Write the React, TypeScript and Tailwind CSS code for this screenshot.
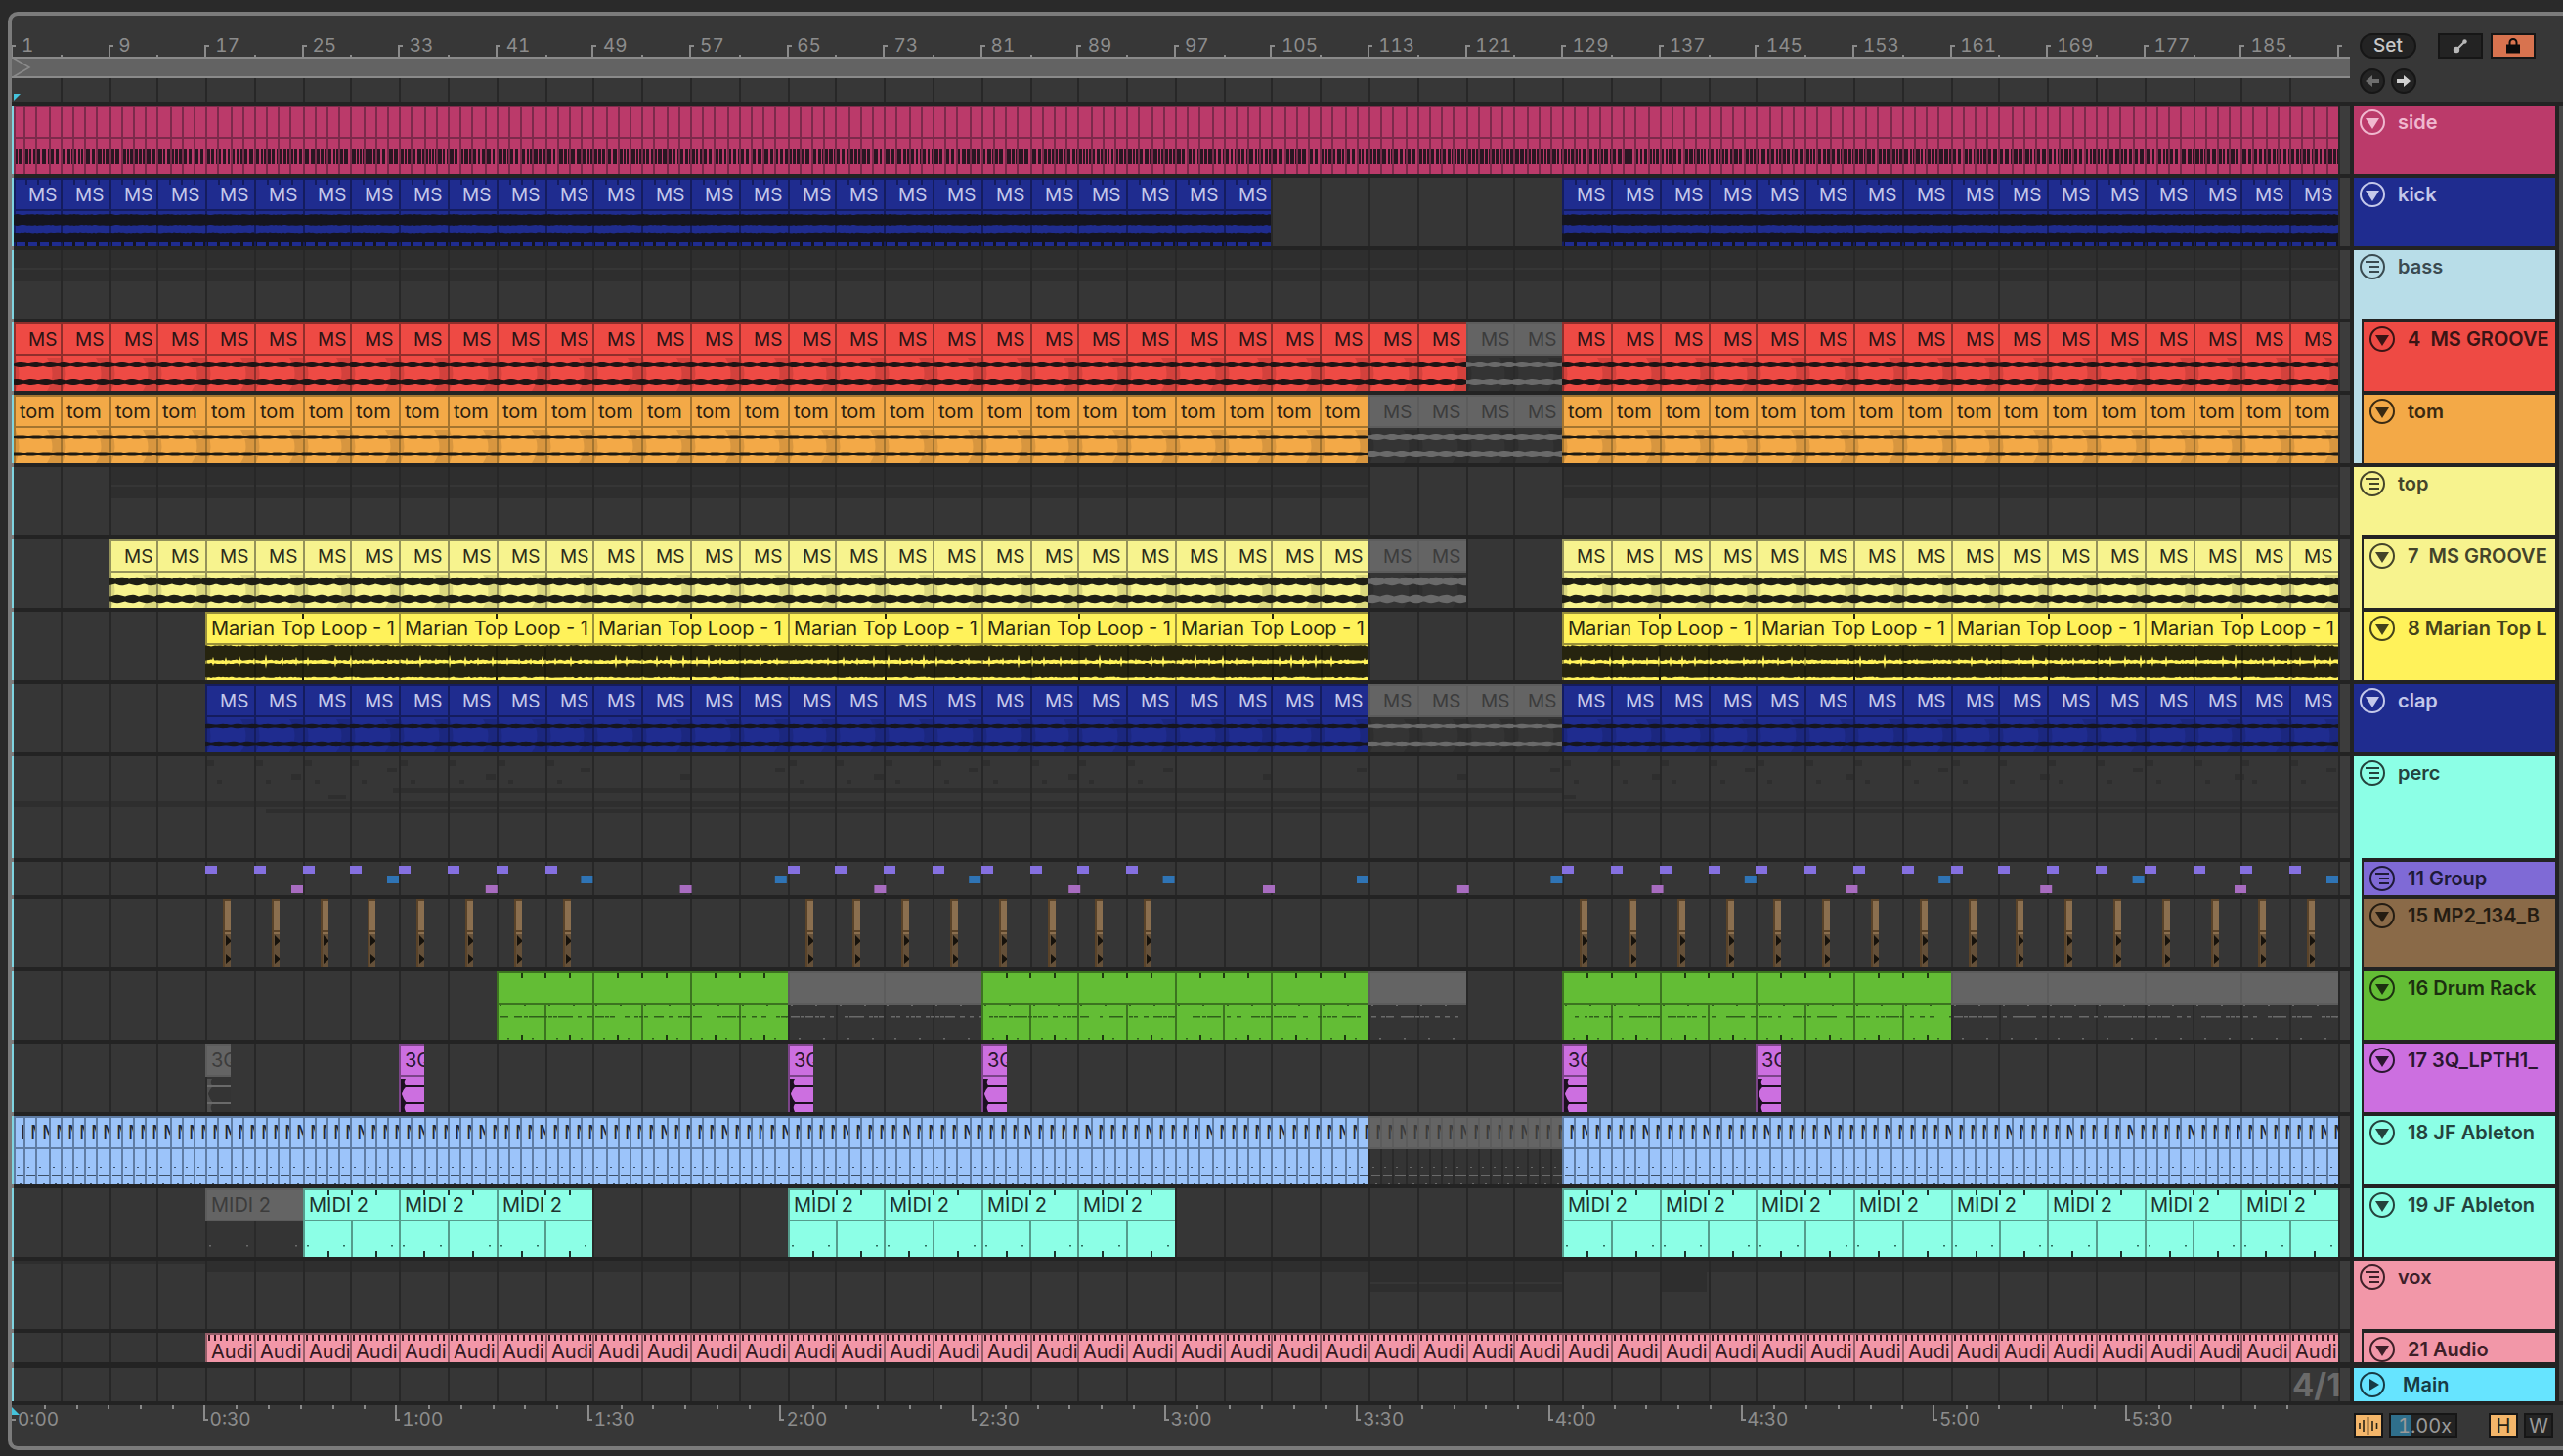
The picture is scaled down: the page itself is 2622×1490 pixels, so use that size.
import type { ReactNode } from "react";

type Kind = "side" | "kick" | "red" | "tom" | "yellow" | "marian" | "clap" | "brown" | "green" | "orchid" | "jf" | "midi" | "audio";

type ClipSpec = {
  x1: number;
  x2: number;
  kind: Kind;
  label?: string;
  muted?: boolean;
  seed: number;
};

const THEME: Record<Kind, { bg: string; edge: string; text: string; ink: string }> = {
  side: { bg: "bg-[#bb3a6a]", edge: "border-[#7c2a4b]", text: "text-[#f0b8cf]", ink: "#2a1622" },
  kick: { bg: "bg-[#1f2c8f]", edge: "border-[#141c5e]", text: "text-[#c4c8ea]", ink: "#15151f" },
  red: { bg: "bg-[#ee4a44]", edge: "border-[#8f2e2b]", text: "text-[#2b1414]", ink: "#1e1414" },
  tom: { bg: "bg-[#f3a947]", edge: "border-[#a3742f]", text: "text-[#2b2010]", ink: "#1e1a12" },
  yellow: { bg: "bg-[#f7f38e]", edge: "border-[#94925a]", text: "text-[#2c2c1a]", ink: "#1e1e14" },
  marian: { bg: "bg-[#fff25a]", edge: "border-[#99903a]", text: "text-[#2c2a10]", ink: "#26240f" },
  clap: { bg: "bg-[#1f2c8f]", edge: "border-[#141c5e]", text: "text-[#c4c8ea]", ink: "#15151f" },
  brown: { bg: "bg-[#8b6f4f]", edge: "border-[#5a4329]", text: "text-[#241c12]", ink: "#16120c" },
  green: { bg: "bg-[#63bd35]", edge: "border-[#3c7320]", text: "text-[#1c3010]", ink: "#2f5f1a" },
  orchid: { bg: "bg-[#cc6fe0]", edge: "border-[#7c4489]", text: "text-[#2a1630]", ink: "#1c1020" },
  jf: { bg: "bg-[#9cc4fa]", edge: "border-[#5f7ca3]", text: "text-[#1f2833]", ink: "#3c5068" },
  midi: { bg: "bg-[#8cffe6]", edge: "border-[#559c8c]", text: "text-[#1e332e]", ink: "#2f6a5c" },
  audio: { bg: "bg-[#f297a8]", edge: "border-[#955d68]", text: "text-[#33191f]", ink: "#33191f" },
};

// 4-bar grid, snapped to the even pixels the 2x capture uses
const xc = (c: number) => 2 * Math.floor((12.9 + c * 49.58) / 2);
const xb = (b: number) => 2 * Math.floor((12.9 + b * 12.395) / 2);

const rnd = (n: number) => {
  const s = Math.sin(n * 127.1) * 43758.5453;
  return s - Math.floor(s);
};

function wavePath(w: number, cy: number, amp: number, seed: number, lobes: boolean) {
  const top: string[] = [];
  const bottom: string[] = [];
  for (let x = 0; x <= w; x += 2) {
    const a = lobes
      ? amp * (0.55 + 0.45 * Math.abs(Math.sin(x * 0.21 + seed)))
      : amp * (0.82 + 0.18 * rnd(x + seed));
    top.push(`${x} ${(cy - a).toFixed(1)}`);
    bottom.unshift(`${x} ${(cy + a).toFixed(1)}`);
  }
  return `M${top.join("L")}L${bottom.join("L")}Z`;
}

function spikes(w: number, seed: number) {
  let d = "";
  for (let x = 8; x < w; x += 11 + Math.round(rnd(x + seed) * 6)) {
    const r = 3 + rnd(x * 3 + seed) * 5;
    d += `M${x - 1.5} 51L${x} ${51 - r}L${x + 1.5} 51L${x} ${51 + r}Z`;
  }
  return d;
}

function ticks(w: number, count: number, y: number, h: number, fill: string, opacity = 1) {
  const out: ReactNode[] = [];
  for (let i = 1; i < count; i++) {
    out.push(
      <rect key={`t${y}-${i}`} x={Math.round((w * i) / count)} y={y} width={2} height={h} fill={fill} opacity={opacity} />
    );
  }
  return out;
}

function Art({ clip, h }: { clip: ClipSpec; h: number }) {
  const { kind, muted, seed } = clip;
  const w = clip.x2 - clip.x1;
  const ink = muted ? "#6a6a6a" : THEME[kind].ink;
  const fade = (
    <path
      d={`M${w - 14} 36Q${w - 3} ${(36 + h) / 2} ${w - 14} ${h}L${w} ${h}L${w} 36Z M2 36Q9 ${(36 + h) / 2} 2 ${h}Z`}
      fill="#000"
      opacity={0.11}
    />
  );
  let body: ReactNode = null;
  if (kind === "side") {
    const rects: ReactNode[] = [];
    let x = 2;
    let i = 0;
    while (x < w) {
      const bw = 2 + Math.round(rnd(seed * 7 + i) * 2);
      rects.push(<rect key={i} x={x} y={44} width={bw} height={16} fill={ink} />);
      x += bw + 1 + Math.round(rnd(seed + i * 3));
      i++;
    }
    body = rects;
  } else if (kind === "kick") {
    const bumps: ReactNode[] = [];
    for (let x = 2; x < w; x += 12) {
      bumps.push(<rect key={x} x={x + 1} y={66} width={9} height={4} fill="#1f2c8f" />);
    }
    body = (
      <>
        {ticks(w, 4, 2, 5, "#141c5e")}
        <path d={wavePath(w, 43, 6, seed, false)} fill={ink} />
        <path d={wavePath(w, 61, 5.5, seed + 3, false)} fill={ink} />
        <rect x={2} y={65} width={w} height={5} fill={ink} />
        {bumps}
      </>
    );
  } else if (kind === "red" || kind === "tom" || kind === "yellow" || kind === "clap") {
    const amp = { red: 3, tom: 1.6, yellow: 4.2, clap: 2.2 }[kind];
    body = (
      <>
        {fade}
        <path d={wavePath(w, 43, amp, seed, true)} fill={ink} />
        <path d={wavePath(w, 61, amp, seed + 1, true)} fill={ink} />
      </>
    );
  } else if (kind === "marian") {
    body = (
      <>
        {ticks(w, 2, 2, 5, "#26240f")}
        {ticks(w, 2, 65, 5, "#26240f")}
        <path d={wavePath(w, 42, 8, seed, false)} fill={ink} />
        <path d={wavePath(w, 60, 8, seed + 5, false)} fill={ink} />
        <path d={spikes(w, seed)} fill="#fff25a" />
        {ticks(w, 4, 34, 36, "#000", 0.25)}
      </>
    );
  } else if (kind === "brown") {
    body = (
      <>
        <path d="M2 36L8 36L8 70L2 70Z" fill="#000" opacity={0.28} />
        <path d="M3 37L9 43L3 48Z M3 56L9 61L3 66Z" fill={ink} />
      </>
    );
  } else if (kind === "green") {
    const bits: ReactNode[] = [];
    for (let x = 3; x < w; x += 5) {
      const on = rnd(seed + x) > 0.3;
      if (on) bits.push(<rect key={x} x={x} y={46} width={3 + Math.round(rnd(x) * 3)} height={1.5} fill={ink} />);
      if (x % 25 === 3) {
        bits.push(<rect key={`a${x}`} x={x} y={34} width={2} height={1.5} fill={ink} />);
        bits.push(<rect key={`b${x}`} x={x + 8} y={68} width={2} height={1.5} fill={ink} />);
      }
    }
    body = (
      <>
        {!muted ? ticks(w, 4, 2, 5, "#1e3a10") : null}
        {!muted ? ticks(w, 4, 65, 5, "#1e3a10") : null}
        <rect x={w / 2} y={34} width={2} height={36} fill={muted ? "#2a2a2a" : "#3c7320"} />
        {bits}
      </>
    );
  } else if (kind === "orchid") {
    body = (
      <>
        <rect x={2} y={42} width={w} height={2} fill={ink} />
        <rect x={2} y={60} width={w} height={2} fill={ink} />
        <path
          d="M2 36L7 36Q4 40 8 43Q4 46 3 52Q5 58 8 61Q4 64 7 70L2 70Z"
          fill={ink}
          opacity={muted ? 0.5 : 1}
        />
      </>
    );
  } else if (kind === "jf") {
    body = (
      <>
        <rect x={4} y={52} width={2} height={1} fill={ink} />
        <rect x={3} y={60} width={w} height={1} fill={ink} />
        <rect x={6 + (seed % 3)} y={69} width={2} height={1} fill={ink} />
      </>
    );
  } else if (kind === "midi") {
    body = (
      <>
        {!muted ? ticks(w, 4, 2, 5, "#1e332e") : null}
        {!muted ? ticks(w, 4, 64, 6, "#1e332e") : null}
        <rect x={w / 2} y={34} width={2} height={36} fill={muted ? "#2a2a2a" : "#559c8c"} />
        <rect x={4} y={58} width={2} height={1.5} fill={ink} />
        <rect x={w / 2 - 8} y={58} width={2} height={1.5} fill={ink} />
        <rect x={w - 8} y={58} width={2} height={1.5} fill={ink} />
      </>
    );
  } else if (kind === "audio") {
    const rects: ReactNode[] = [];
    for (let x = 3; x < w - 1; x += 6) rects.push(<rect key={x} x={x} y={2} width={2} height={6} fill={ink} />);
    body = rects;
  }
  return (
    <svg className="absolute inset-0" width={w} height={h}>
      {body}
    </svg>
  );
}

function Clip({ clip, left, h }: { clip: ClipSpec; left: number; h: number }) {
  const t = THEME[clip.kind];
  const m = clip.muted;
  const isMs = clip.kind === "kick" || clip.kind === "red" || clip.kind === "yellow" || clip.kind === "clap";
  const isAudio = clip.kind === "audio";
  return (
    <div className="relative flex shrink-0 flex-col overflow-hidden" style={{ marginLeft: left, width: clip.x2 - clip.x1 }}>
      <div
        className={`flex shrink-0 items-center overflow-hidden whitespace-nowrap border-l-2 border-t-2 leading-none ${
          isMs ? "pl-[13px] text-[19px]" : clip.kind === "jf" ? "pl-[5px] text-[20px]" : "pl-[4px] text-[20px]"
        } ${isAudio ? "h-[30px] pt-[6px]" : "h-[34px] border-b-2"} ${
          m ? "border-[#5c5c5c] bg-[#646464] text-[#3c3c3c]" : `${t.edge} ${t.bg} ${t.text}`
        }`}
      >
        {clip.label}
      </div>
      {!isAudio && <div className={`flex-1 border-l-2 ${m ? "border-[#2a2a2a] bg-[#343434]" : `${t.edge} ${t.bg}`}`} />}
      <Art clip={clip} h={h} />
    </div>
  );
}

type Band = [number, number, number, number];

function GridLines() {
  return (
    <>
      {Array.from({ length: 47 }, (_, i) => (
        <div key={i} className="absolute bottom-0 top-0 w-[2px] bg-[#272727]" style={{ left: xc(i + 1) - 14 }} />
      ))}
    </>
  );
}

function Lane({
  height,
  h,
  clips = [],
  bands = [],
  children,
}: {
  height: string;
  h: number;
  clips?: ClipSpec[];
  bands?: Band[];
  children?: ReactNode;
}) {
  let pos = 0;
  return (
    <div className={`flex ${height}`}>
      <div className="relative flex w-[2378px] bg-[#363636]">
        <div className="absolute -left-[2px] bottom-0 top-0 w-[2px] bg-[#7fd4e0]" />
        {bands.map(([x1, x2, y, bh], i) => (
          <div key={i} className="absolute bg-[#2e2e2e]" style={{ left: x1 - 14, width: x2 - x1, top: y, height: bh }} />
        ))}
        <GridLines />
        {clips.map((clip, i) => {
          const x1 = Math.max(clip.x1, 14) - 14;
          const left = x1 - pos;
          pos = clip.x2 - 14;
          const fixed = { ...clip, x1: x1 + 14 };
          return <Clip key={i} clip={fixed} left={left} h={h} />;
        })}
        {children}
      </div>
      <div className="w-[2px] bg-[#272727]" />
      <div className="w-[10px] bg-[#3c3c3c]" />
    </div>
  );
}

function cells(a: number, b: number, step: number, kind: Kind, label?: string, muted?: boolean): ClipSpec[] {
  const out: ClipSpec[] = [];
  for (let c = a; c < b; c += step) out.push({ x1: xc(c), x2: xc(c + step), kind, label, muted, seed: c });
  return out;
}

function bars(a: number, b: number, kind: Kind, label?: string, muted?: boolean): ClipSpec[] {
  const out: ClipSpec[] = [];
  for (let i = a; i < b; i++) out.push({ x1: xb(i), x2: xb(i + 1), kind, label, muted, seed: i });
  return out;
}

const narrow = (cs: number[], dx: number, width: number, kind: Kind, label?: string, muted?: boolean): ClipSpec[] =>
  cs.map((c) => ({ x1: xc(c) + dx, x2: xc(c) + dx + width, kind, label, muted, seed: c }));

const range = (a: number, b: number) => Array.from({ length: b - a }, (_, i) => a + i);

const PURPLE = [...range(4, 12), ...range(16, 24), ...range(32, 48)];
const BLUE_X = range(0, 11).map((i) => 396 + i * 198.4);
const PINK_X = range(0, 11).map((i) => 298 + i * 198.8);

function Notes() {
  return (
    <svg className="absolute inset-0" width={2378} height={34}>
      {PURPLE.map((c) => (
        <rect key={c} x={xc(c) - 14} y={4} width={12} height={8} fill="#8570e0" />
      ))}
      {BLUE_X.map((x) => (
        <rect key={x} x={x - 14} y={14} width={12} height={8} fill="#2f74b5" />
      ))}
      {PINK_X.map((x) => (
        <rect key={x} x={x - 14} y={24} width={12} height={8} fill="#a86cc0" />
      ))}
    </svg>
  );
}

// the group lane echoes its children as faint blocks
const PERC_BANDS: Band[] = [
  [14, 2392, 46, 6],
  [402, 1598, 32, 6],
  [272, 1400, 54, 4],
  [1598, 2392, 54, 4],
  [336, 354, 40, 4],
  [1598, 1612, 40, 4],
  ...PURPLE.map((c): Band => [xc(c) + 2, xc(c) + 9, 4, 6]),
  ...BLUE_X.map((x): Band => [x, x + 10, 12, 4]),
  ...PINK_X.map((x): Band => [x, x + 10, 18, 6]),
  ...PURPLE.map((c): Band => [xc(c) + 12, xc(c) + 17, 24, 4]),
];

function FoldIcon({ kind }: { kind: "fold" | "group" | "play" }) {
  return (
    <svg width={26} height={26} viewBox="0 0 26 26" className="shrink-0">
      <circle cx={13} cy={13} r={12} fill="none" stroke="currentColor" strokeWidth={2} />
      {kind === "fold" && <path d="M6 9H20L13 20Z" fill="currentColor" />}
      {kind === "group" && <path d="M6 8H20M10 13H20M10 18H20" stroke="currentColor" strokeWidth={2} fill="none" />}
      {kind === "play" && <path d="M10 7L20 13L10 19Z" fill="currentColor" />}
    </svg>
  );
}

function Header({
  name,
  icon,
  cls,
  height,
  child,
}: {
  name: string;
  icon: "fold" | "group" | "play";
  cls: string;
  height: string;
  child?: boolean;
}) {
  return (
    <div
      className={`flex items-start overflow-hidden whitespace-pre pl-[6px] pt-[4px] text-[20px] font-semibold leading-[26px] ${cls} ${height} ${
        child ? "border-l-2 border-t-4 border-[#232323]" : ""
      }`}
    >
      <FoldIcon kind={icon} />
      <span className={icon === "play" ? "ml-[18px]" : "ml-[13px]"}>{name}</span>
    </div>
  );
}

function HeaderGroup({ bg, children }: { bg: string; children: ReactNode }) {
  return <div className={bg}>{children}</div>;
}

function Kid({ children }: { children: ReactNode }) {
  return <div className="ml-[8px]">{children}</div>;
}

const LOOP_LABELS = range(0, 24).map((i) => 1 + i * 8);
const TIME_LABELS = ["0:00", "0:30", "1:00", "1:30", "2:00", "2:30", "3:00", "3:30", "4:00", "4:30", "5:00", "5:30"];

function BarRuler() {
  return (
    <div className="relative flex h-[42px] pl-[1px] text-[19px] leading-[22px] text-[#8c8c8c] tabular-nums">
      <svg className="absolute inset-0" width={2392} height={42}>
        {range(0, 49).map((c) =>
          c % 2 === 0 ? (
            <path key={c} d={`M${xc(c) - 12} 42V31H${xc(c) - 8}`} fill="none" stroke="#8a8a8a" strokeWidth={2} />
          ) : (
            <rect key={c} x={xc(c) - 12} y={40} width={2} height={2} fill="#8a8a8a" />
          )
        )}
      </svg>
      {LOOP_LABELS.map((n) => (
        <div key={n} className="w-[99.16px] shrink-0 pl-[9px] pt-[20px]">
          {n}
        </div>
      ))}
    </div>
  );
}

function TimeRuler() {
  return (
    <div className="relative flex h-[42px] w-[2392px] text-[19px] leading-[22px] text-[#8c8c8c] tabular-nums">
      <svg className="absolute inset-0" width={2392} height={42}>
        {range(0, 72).map((i) => {
          const x = Math.round(i * 32.77);
          return i % 6 === 0 ? (
            <path key={i} d={i === 0 ? "M0 15H4" : `M${x} 0V15H${x + 4}`} fill="none" stroke="#8a8a8a" strokeWidth={2} />
          ) : (
            <rect key={i} x={x} y={0} width={2} height={4} fill="#8a8a8a" />
          );
        })}
        <path d="M0 2L8 10H0Z" fill="#45c3dc" />
      </svg>
      {TIME_LABELS.map((t) => (
        <div key={t} className="w-[196.6px] shrink-0 pl-[6px] pt-[4px]">
          {t}
        </div>
      ))}
    </div>
  );
}

function TopControls() {
  return (
    <div className="flex-1 pl-[10px] pt-[18px]">
      <div className="flex items-center">
        <div className="flex h-[26px] w-[58px] items-center justify-center rounded-full border-2 border-[#161616] bg-[#232323] text-[19px] font-medium text-[#c8c8c8]">
          Set
        </div>
        <div className="ml-[22px] flex h-[26px] w-[46px] items-center justify-center border-2 border-[#161616] bg-[#232323]">
          <svg width={16} height={16} viewBox="0 0 16 16">
            <path d="M4 12L12 4" stroke="#b8b8b8" strokeWidth={2} />
            <circle cx={4} cy={12} r={3.2} fill="#b8b8b8" />
            <circle cx={12.5} cy={3.5} r={2.2} fill="#b8b8b8" />
          </svg>
        </div>
        <div className="ml-[8px] flex h-[26px] w-[46px] items-center justify-center border-2 border-[#161616] bg-[#d8734f]">
          <svg width={16} height={16} viewBox="0 0 16 16">
            <path d="M4.5 7V4.5a3.5 3.5 0 0 1 7 0V7" fill="none" stroke="#0c0c0c" strokeWidth={2} />
            <rect x={1} y={6.5} width={14} height={9} fill="#0c0c0c" />
          </svg>
        </div>
      </div>
      <div className="mt-[10px] flex gap-[6px]">
        <div className="flex h-[26px] w-[26px] items-center justify-center rounded-full border-2 border-[#161616] bg-[#232323]">
          <svg width={14} height={12} viewBox="0 0 14 12">
            <path d="M0 6L7 0V4H14V8H7V12Z" fill="#6e6e6e" />
          </svg>
        </div>
        <div className="flex h-[26px] w-[26px] items-center justify-center rounded-full border-2 border-[#161616] bg-[#232323]">
          <svg width={14} height={12} viewBox="0 0 14 12">
            <path d="M14 6L7 0V4H0V8H7V12Z" fill="#d0d0d0" />
          </svg>
        </div>
      </div>
    </div>
  );
}

function BottomControls() {
  return (
    <div className="flex flex-1 items-start pl-[4px] pt-[8px] text-[20px] leading-none">
      <div className="flex h-[26px] w-[30px] items-center justify-center border-2 border-[#161616] bg-[#f4b66a]">
        <svg width={20} height={18} viewBox="0 0 20 18">
          <path d="M1 6V12M5 3V15M9.5 0V18M14 4V14M18.5 6V12" stroke="#2a2416" strokeWidth={1.6} />
        </svg>
      </div>
      <div className="relative ml-[6px] flex h-[26px] w-[70px] items-center border-2 border-[#161616] bg-[#232323] pl-[7px] text-[#9a9a9a] tabular-nums">
        <div className="absolute bottom-0 left-0 top-0 w-[20px] bg-[#2f6f8c]" />
        <span className="relative">1.00x</span>
      </div>
      <div className="ml-[32px] flex h-[26px] w-[30px] items-center justify-center border-2 border-[#161616] bg-[#f4b66a] text-[#2a2416]">
        H
      </div>
      <div className="ml-[6px] flex h-[26px] w-[30px] items-center justify-center border-2 border-[#161616] bg-[#232323] text-[#9a9a9a]">
        W
      </div>
    </div>
  );
}

export default function App() {
  return (
    <div className="h-[1490px] w-[2622px] overflow-hidden bg-[#2a2a2a] pl-[8px] pt-[12px] [font-family:Inter,sans-serif]">
      <div className="flex h-[1472px] w-[2700px] flex-col rounded-l-[10px] border-y-4 border-l-4 border-[#7b7b7b] bg-[#373737]">
        <div className="flex h-[88px] w-[2610px]">
          <div className="w-[2392px]">
            <BarRuler />
            <div className="relative h-[22px] border-y-2 border-[#8a8a8a] bg-[#636363]">
              <svg className="absolute -top-[2px] left-0" width={22} height={22}>
                <path d="M1 1L18 11L1 21" fill="none" stroke="#8a8a8a" strokeWidth={1.5} />
              </svg>
            </div>
            <div className="relative ml-[2px] h-[24px] w-[2378px]">
              <GridLines />
              <svg className="absolute left-0 top-[16px]" width={8} height={8}>
                <path d="M0 0H7L0 7Z" fill="#45c3dc" />
              </svg>
            </div>
          </div>
          <TopControls />
        </div>

        <div className="flex h-[1334px] w-[2610px] bg-[#232323] py-[4px]">
          <div className="flex w-[2392px] flex-col border-l-2 border-[#7b7b7b]">
            <div className="flex flex-col gap-[4px]">
              <Lane height="h-[70px]" h={70} clips={bars(0, 192, "side")} />
              <Lane
                height="h-[70px]"
                h={70}
                clips={[...cells(0, 26, 1, "kick", "MS"), ...cells(32, 48, 1, "kick", "MS")]}
              />
              <Lane height="h-[70px]" h={70} bands={[[14, 2392, 0, 18], [14, 2392, 20, 12]]} />
              <Lane
                height="h-[70px]"
                h={70}
                clips={[...cells(0, 30, 1, "red", "MS"), ...cells(30, 32, 1, "red", "MS", true), ...cells(32, 48, 1, "red", "MS")]}
              />
              <Lane
                height="h-[70px]"
                h={70}
                clips={[...cells(0, 28, 1, "tom", "tom"), ...cells(28, 32, 1, "red", "MS", true), ...cells(32, 48, 1, "tom", "tom")]}
              />
              <Lane height="h-[70px]" h={70} bands={[[112, 1400, 0, 18], [112, 1400, 20, 12], [1598, 2392, 0, 18], [1598, 2392, 20, 12]]} />
              <Lane
                height="h-[70px]"
                h={70}
                clips={[...cells(2, 28, 1, "yellow", "MS"), ...cells(28, 30, 1, "yellow", "MS", true), ...cells(32, 48, 1, "yellow", "MS")]}
              />
              <Lane
                height="h-[70px]"
                h={70}
                clips={[...cells(4, 28, 4, "marian", "Marian Top Loop - 1"), ...cells(32, 48, 4, "marian", "Marian Top Loop - 1")]}
              />
              <Lane
                height="h-[70px]"
                h={70}
                clips={[...cells(4, 28, 1, "clap", "MS"), ...cells(28, 32, 1, "clap", "MS", true), ...cells(32, 48, 1, "clap", "MS")]}
              />
              <Lane height="h-[104px]" h={104} bands={PERC_BANDS} />
              <Lane height="h-[34px]" h={34}>
                <Notes />
              </Lane>
              <Lane
                height="h-[70px]"
                h={70}
                clips={[
                  ...narrow(range(4, 12), 18, 8, "brown"),
                  ...narrow(range(16, 24), 18, 8, "brown"),
                  ...narrow(range(32, 48), 18, 8, "brown"),
                ]}
              />
              <Lane
                height="h-[70px]"
                h={70}
                clips={[
                  ...cells(10, 16, 2, "green"),
                  ...cells(16, 20, 2, "green", undefined, true),
                  ...cells(20, 28, 2, "green"),
                  ...cells(28, 30, 2, "green", undefined, true),
                  ...cells(32, 40, 2, "green"),
                  ...cells(40, 48, 2, "green", undefined, true),
                ]}
              />
              <Lane
                height="h-[70px]"
                h={70}
                clips={[
                  ...narrow([4], 0, 26, "orchid", "3Q", true),
                  ...narrow([8, 16, 20, 32, 36], 0, 26, "orchid", "3Q"),
                ]}
              />
              <Lane
                height="h-[70px]"
                h={70}
                clips={[...bars(0, 112, "jf", "M"), ...bars(112, 128, "jf", "M", true), ...bars(128, 192, "jf", "M")]}
              />
              <Lane
                height="h-[70px]"
                h={70}
                clips={[
                  ...cells(4, 6, 2, "midi", "MIDI 2", true),
                  ...cells(6, 12, 2, "midi", "MIDI 2"),
                  ...cells(16, 24, 2, "midi", "MIDI 2"),
                  ...cells(32, 48, 2, "midi", "MIDI 2"),
                ]}
              />
              <Lane
                height="h-[70px]"
                h={70}
                bands={[[210, 2392, 0, 12], [14, 210, 0, 4], [1400, 1598, 12, 10], [1400, 1598, 24, 8], [1698, 1746, 12, 20]]}
              />
              <Lane height="h-[30px]" h={30} clips={cells(4, 48, 1, "audio", "Audi")} />
            </div>
            <div className="mt-[6px]">
              <Lane height="h-[34px]" h={34}>
                <div className="absolute left-[2331px] top-[2px] text-[33px] font-bold leading-[30px] text-[#6a6a6a]">4/1</div>
              </Lane>
            </div>
          </div>

          <div className="ml-[4px] flex w-[206px] flex-col">
            <div className="flex flex-col gap-[4px]">
              <Header name="side" icon="fold" cls="bg-[#bb3a6a] text-[#f0b8cf]" height="h-[70px]" />
              <Header name="kick" icon="fold" cls="bg-[#1f2c8f] text-[#c4c8ea]" height="h-[70px]" />
              <HeaderGroup bg="bg-[#b8dde8]">
                <Header name="bass" icon="group" cls="text-[#3a4a50]" height="h-[70px]" />
                <Kid>
                  <Header child name="4  MS GROOVE" icon="fold" cls="bg-[#ee4a44] text-[#3a1414]" height="h-[74px]" />
                  <Header child name="tom" icon="fold" cls="bg-[#f3a947] text-[#3a2a12]" height="h-[74px]" />
                </Kid>
              </HeaderGroup>
              <HeaderGroup bg="bg-[#f7f38e]">
                <Header name="top" icon="group" cls="text-[#44442a]" height="h-[70px]" />
                <Kid>
                  <Header child name="7  MS GROOVE" icon="fold" cls="bg-[#f7f38e] text-[#44442a]" height="h-[74px]" />
                  <Header child name="8 Marian Top L" icon="fold" cls="bg-[#fff25a] text-[#44421a]" height="h-[74px]" />
                </Kid>
              </HeaderGroup>
              <Header name="clap" icon="fold" cls="bg-[#1f2c8f] text-[#c4c8ea]" height="h-[70px]" />
              <HeaderGroup bg="bg-[#8cffe6]">
                <Header name="perc" icon="group" cls="text-[#24423c]" height="h-[104px]" />
                <Kid>
                  <Header child name="11 Group" icon="group" cls="bg-[#7f6ad6] text-[#1e1a38]" height="h-[38px]" />
                  <Header child name="15 MP2_134_B" icon="fold" cls="bg-[#8a6a48] text-[#241c12]" height="h-[74px]" />
                  <Header child name="16 Drum Rack" icon="fold" cls="bg-[#63bd35] text-[#1c3010]" height="h-[74px]" />
                  <Header child name="17 3Q_LPTH1_" icon="fold" cls="bg-[#cc6fe0] text-[#2a1630]" height="h-[74px]" />
                  <Header child name="18 JF Ableton" icon="fold" cls="bg-[#8cffe6] text-[#24423c]" height="h-[74px]" />
                  <Header child name="19 JF Ableton" icon="fold" cls="bg-[#8cffe6] text-[#24423c]" height="h-[74px]" />
                </Kid>
              </HeaderGroup>
              <HeaderGroup bg="bg-[#f297a8]">
                <Header name="vox" icon="group" cls="text-[#3e2028]" height="h-[70px]" />
                <Kid>
                  <Header child name="21 Audio" icon="fold" cls="bg-[#f297a8] text-[#3e2028]" height="h-[34px]" />
                </Kid>
              </HeaderGroup>
            </div>
            <div className="mt-[6px]">
              <Header name="Main" icon="play" cls="bg-[#66e4ff] text-[#173a44]" height="h-[34px]" />
            </div>
          </div>

          <div className="ml-[4px] w-[4px] bg-[#464646]" />
        </div>

        <div className="flex h-[42px] w-[2610px]">
          <TimeRuler />
          <BottomControls />
        </div>
      </div>
    </div>
  );
}
